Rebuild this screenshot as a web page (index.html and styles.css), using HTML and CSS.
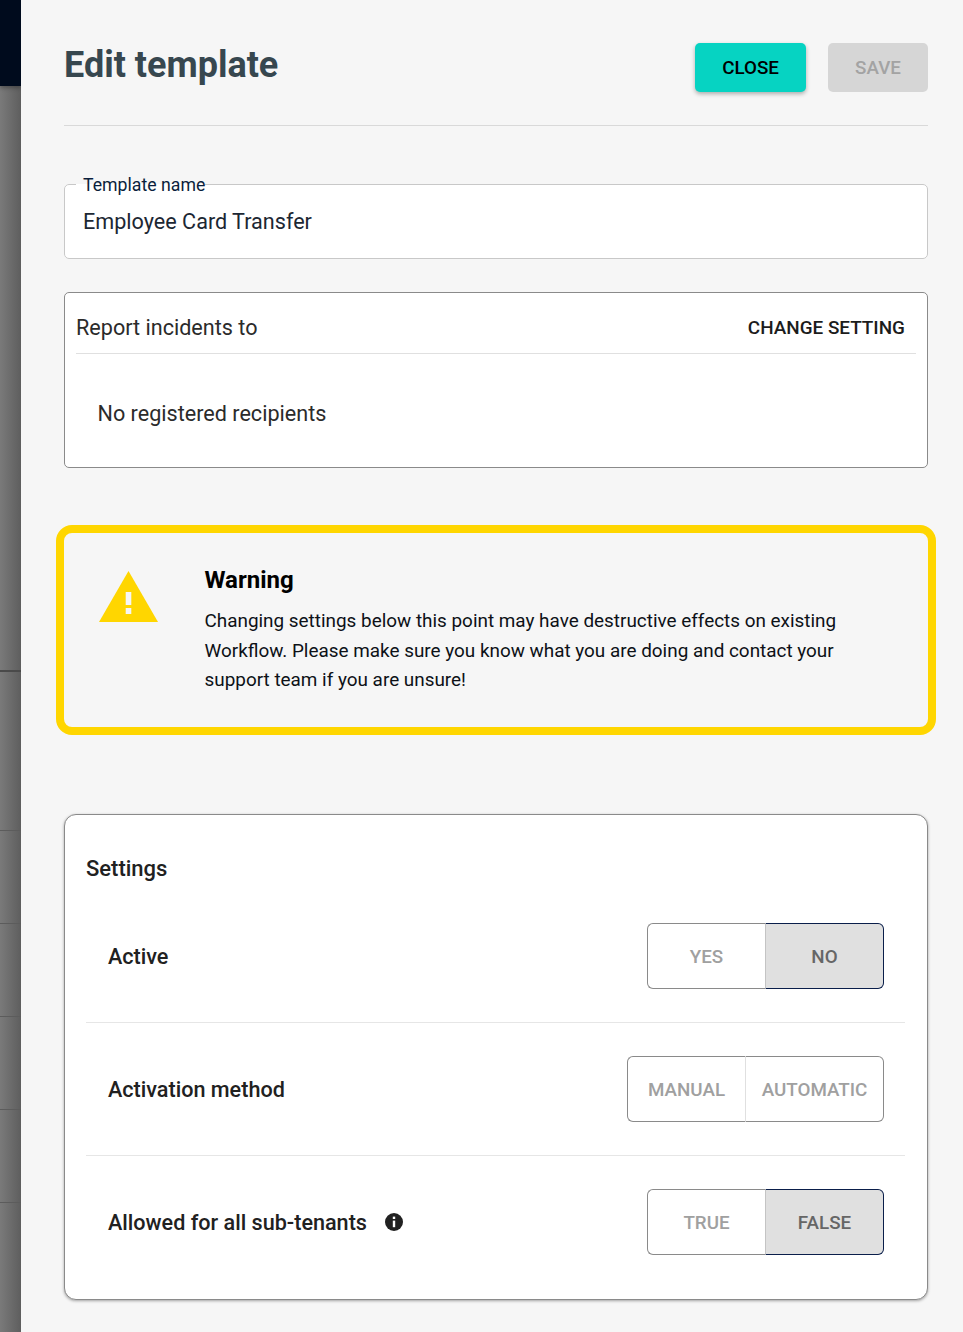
FILE: index.html
```html
<html>
  <head>
    <link rel="stylesheet" href="styles.css">
  </head>
  <body>
    <div class="backdrop">
      <div class="backdrop-top"></div>
      <div class="backdrop-row backdrop-row-first"></div>
      <div class="backdrop-row"></div>
      <div class="backdrop-row"></div>
      <div class="backdrop-row"></div>
      <div class="backdrop-row"></div>
      <div class="backdrop-row"></div>
    </div>

    <div class="drawer">
      <div class="header">
        <h1>Edit template</h1>
        <button class="btn btn-close">CLOSE</button>
        <button class="btn btn-save">SAVE</button>
      </div>

      <fieldset class="name-field">
        <legend>Template name</legend>
        <div class="name-value">Employee Card Transfer</div>
      </fieldset>

      <div class="report-box">
        <div class="report-head">
          <span class="report-title">Report incidents to</span>
          <span class="report-link">CHANGE SETTING</span>
        </div>
        <div class="report-empty">No registered recipients</div>
      </div>

      <div class="warning">
        <svg class="warning-icon" viewBox="0 0 59 51">
          <path fill="#ffd600" d="M29.500 0L59 51H0Z" />
          <rect fill="#f6f6f6" x="26.700" y="21" width="5.600" height="13" />
          <rect fill="#f6f6f6" x="26.700" y="37" width="5.600" height="6" />
        </svg>
        <div class="warning-text">
          <h2>Warning</h2>
          <p>Changing settings below this point may have destructive effects on existing Workflow. Please make sure you know what you are doing and contact your support team if you are unsure!</p>
        </div>
      </div>

      <div class="settings">
        <h3>Settings</h3>

        <div class="setting">
          <span class="setting-label">Active</span>
          <div class="toggle">
            <span class="toggle-item toggle-yes">YES</span>
            <span class="toggle-item toggle-no toggle-on">NO</span>
          </div>
        </div>

        <div class="setting">
          <span class="setting-label">Activation method</span>
          <div class="toggle">
            <span class="toggle-item toggle-yes">MANUAL</span>
            <span class="toggle-item toggle-auto">AUTOMATIC</span>
          </div>
        </div>

        <div class="setting setting-last">
          <span class="setting-label">Allowed for all sub-tenants</span>
          <svg class="info-icon" viewBox="0 0 18 18">
            <circle fill="#212121" cx="9" cy="9" r="9" />
            <rect fill="#fff" x="7.800" y="3.600" width="2.400" height="2.400" />
            <rect fill="#fff" x="7.800" y="7.600" width="2.400" height="6.600" />
          </svg>
          <div class="toggle">
            <span class="toggle-item toggle-yes">TRUE</span>
            <span class="toggle-item toggle-no toggle-on">FALSE</span>
          </div>
        </div>
      </div>
    </div>
  </body>
</html>
```

FILE: styles.css
```css
html,
body {
  height: 100%;
}

body {
  margin: 0;
  display: flex;
  height: 1332px;
  overflow: hidden;
  font-family: Roboto, sans-serif;
  background-color: #f6f6f6;
  color: #212121;
}

h1,
h2,
h3,
p {
  margin: 0;
}

/* page behind the drawer */
.backdrop {
  width: 21px;
  flex-shrink: 0;
  background: linear-gradient(to right, #7a7a7a, #5e5e5e);
}

.backdrop-top {
  height: 86px;
  background-color: #000b1d;
  box-shadow: 0 2px 4px rgba(0, 0, 0, 0.3);
}

.backdrop-row {
  height: 92px;
  border-bottom: 1px solid #5c5c5c;
}

.backdrop-row-first {
  height: 584px;
  border-bottom: 2px solid #4a4a4a;
  margin-bottom: 66px;
}

.drawer {
  flex: 1;
  padding: 43px 35px 0 43px;
  background-color: #f6f6f6;
}

.header {
  display: flex;
  align-items: flex-start;
  height: 82px;
  border-bottom: 1px solid #d9d9d9;
  margin-bottom: 49px;
}

h1 {
  flex: 1;
  font-size: 36px;
  font-weight: 700;
  line-height: 45px;
  color: #37474f;
}

.btn {
  height: 49px;
  padding: 0;
  border: 0;
  border-radius: 5px;
  font-family: Roboto, sans-serif;
  font-size: 18.800px;
  font-weight: 500;
}

.btn-close {
  width: 111px;
  margin-right: 22px;
  background-color: #06d3c2;
  color: #000;
  box-shadow: 0 2px 4px rgba(0, 0, 0, 0.3);
}

.btn-save {
  width: 100px;
  background-color: #d6d6d6;
  color: #a3a3a3;
}

.name-field {
  margin: 0 0 33px;
  padding: 0 18px;
  height: 84px;
  box-sizing: border-box;
  border: 1px solid #c8c8c8;
  border-radius: 5px;
  background-color: #fff;
}

.name-field legend {
  margin-left: -7px;
  padding: 1px 0 0 7px;
  font-size: 17.700px;
  line-height: 18px;
  color: #0a1e3c;
}

.name-value {
  margin-top: 14px;
  font-size: 21.600px;
  line-height: 28px;
  color: #1c2733;
}

.report-box {
  height: 176px;
  box-sizing: border-box;
  padding: 0 11px;
  border: 1px solid #8a8a8a;
  border-radius: 5px;
  background-color: #fff;
  margin-bottom: 57px;
}

.report-head {
  display: flex;
  justify-content: space-between;
  align-items: center;
  height: 52px;
  padding: 8px 11px 0 0;
  border-bottom: 1px solid #e0e0e0;
}

.report-title {
  font-size: 21.600px;
  color: #2b2b2b;
}

.report-link {
  font-size: 18.900px;
  font-weight: 500;
  color: #1c1c1c;
}

.report-empty {
  padding: 47px 0 0 21.500px;
  font-size: 21.600px;
  line-height: 26px;
  color: #2b2b2b;
}

.warning {
  display: flex;
  height: 210px;
  box-sizing: border-box;
  margin: 0 -8px 79px;
  padding: 38px 40px 0 35px;
  border: 8px solid #ffd600;
  border-radius: 16px;
}

.warning-icon {
  width: 59px;
  height: 51px;
  flex-shrink: 0;
  margin-right: 46.500px;
}

.warning-text h2 {
  font-size: 24px;
  font-weight: 700;
  line-height: 30px;
  color: #000;
  margin-bottom: 11px;
  margin-top: -6px;
}

.warning-text p {
  font-size: 18.900px;
  line-height: 29.500px;
  color: #0d1117;
}

.settings {
  height: 486px;
  box-sizing: border-box;
  padding: 40px 22px 0 21px;
  border: 1px solid #8a8a8a;
  border-radius: 12px;
  background-color: #fff;
  box-shadow: 0 1px 3px rgba(0, 0, 0, 0.35);
}

.settings h3 {
  font-size: 22px;
  font-weight: 500;
  line-height: 28px;
  color: #212121;
  margin-bottom: 40px;
}

.setting {
  display: flex;
  align-items: center;
  padding: 0 21px 33px 22px;
  border-bottom: 1px solid #e6e6e6;
  margin-bottom: 33px;
}

.setting-last {
  padding-bottom: 0;
  margin-bottom: 0;
  border-bottom: 0;
}

.setting-label {
  font-size: 21.600px;
  font-weight: 500;
  color: #212121;
}

.info-icon {
  width: 18px;
  height: 18px;
  margin-left: 18px;
}

.toggle {
  display: flex;
  margin-left: auto;
  height: 66px;
  font-size: 18.800px;
  font-weight: 500;
  color: #a0a0a0;
}

.toggle-item {
  display: flex;
  align-items: center;
  justify-content: center;
  box-sizing: border-box;
  padding-top: 1px;
  border: 1px solid #8a8a8a;
}

.toggle-yes {
  width: 118px;
  border-right: 0;
  border-radius: 6px 0 0 6px;
}

.toggle-no {
  width: 119px;
  border-radius: 0 6px 6px 0;
}

.toggle-on {
  background-color: #e0e0e0;
  color: #666;
  border-color: #0a1e4a;
  border-left-color: #c4c4c4;
}

.toggle-auto {
  width: 139px;
  border-left-color: #e0e0e0;
  border-radius: 0 6px 6px 0;
}
```
